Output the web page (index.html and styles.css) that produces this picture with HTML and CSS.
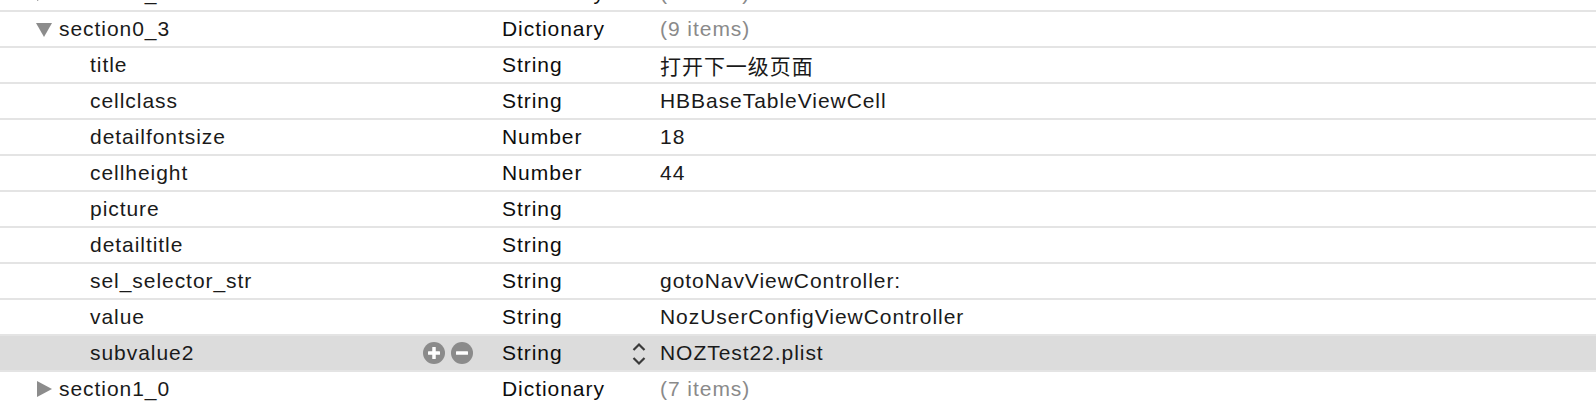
FILE: index.html
```html
<!DOCTYPE html>
<html>
<head>
<meta charset="utf-8">
<link rel="stylesheet" href="styles.css">
</head>
<body>
<div class="table">
  <div class="row partial">
    <div class="key lvl0"><span class="tri right"></span><span class="k">section0_2</span></div>
    <div class="type">Dictionary</div>
    <div class="val muted">(9 items)</div>
  </div>
  <div class="row">
    <div class="key lvl0"><span class="tri down"></span><span class="k">section0_3</span></div>
    <div class="type">Dictionary</div>
    <div class="val muted">(9 items)</div>
  </div>
  <div class="row">
    <div class="key lvl1"><span class="k">title</span></div>
    <div class="type">String</div>
    <div class="val">打开下一级页面</div>
  </div>
  <div class="row">
    <div class="key lvl1"><span class="k">cellclass</span></div>
    <div class="type">String</div>
    <div class="val">HBBaseTableViewCell</div>
  </div>
  <div class="row">
    <div class="key lvl1"><span class="k">detailfontsize</span></div>
    <div class="type">Number</div>
    <div class="val">18</div>
  </div>
  <div class="row">
    <div class="key lvl1"><span class="k">cellheight</span></div>
    <div class="type">Number</div>
    <div class="val">44</div>
  </div>
  <div class="row">
    <div class="key lvl1"><span class="k">picture</span></div>
    <div class="type">String</div>
    <div class="val"></div>
  </div>
  <div class="row">
    <div class="key lvl1"><span class="k">detailtitle</span></div>
    <div class="type">String</div>
    <div class="val"></div>
  </div>
  <div class="row">
    <div class="key lvl1"><span class="k">sel_selector_str</span></div>
    <div class="type">String</div>
    <div class="val">gotoNavViewController:</div>
  </div>
  <div class="row">
    <div class="key lvl1"><span class="k">value</span></div>
    <div class="type">String</div>
    <div class="val">NozUserConfigViewController</div>
  </div>
  <div class="row selected">
    <div class="key lvl1"><span class="k">subvalue2</span>
      <span class="btns">
        <svg class="cbtn" width="22" height="22" viewBox="0 0 22 22"><circle cx="11" cy="11" r="11" fill="#8b8b8b"/><rect x="5" y="9.25" width="12" height="3.5" rx="0.5" fill="#fff"/><rect x="9.25" y="5" width="3.5" height="12" rx="0.5" fill="#fff"/></svg>
        <svg class="cbtn" width="22" height="22" viewBox="0 0 22 22"><circle cx="11" cy="11" r="11" fill="#8b8b8b"/><rect x="5" y="9.25" width="12" height="3.5" rx="0.5" fill="#fff"/></svg>
      </span>
    </div>
    <div class="type">String
      <svg class="stepper" width="16" height="26" viewBox="0 0 16 26"><polyline points="2.5,9 8,3.5 13.5,9" fill="none" stroke="#3a3a3a" stroke-width="2.2"/><polyline points="2.5,17 8,22.5 13.5,17" fill="none" stroke="#3a3a3a" stroke-width="2.2"/></svg>
    </div>
    <div class="val">NOZTest22.plist</div>
  </div>
  <div class="row">
    <div class="key lvl0"><span class="tri right"></span><span class="k">section1_0</span></div>
    <div class="type">Dictionary</div>
    <div class="val muted">(7 items)</div>
  </div>
</div>
</body>
</html>
```

FILE: styles.css
```css
html, body {
  margin: 0;
  padding: 0;
  background: #ffffff;
}
body {
  width: 1596px;
  height: 402px;
  overflow: hidden;
  font-family: "Liberation Sans", "Noto Sans CJK SC", sans-serif;
  font-size: 21px;
  letter-spacing: 0.95px;
  color: #1a1a1a;
}
.table {
  display: flex;
  flex-direction: column;
}
.row {
  display: grid;
  grid-template-columns: 502px 158px 1fr;
  height: 34px;
  border-bottom: 2px solid #e4e4e4;
  align-items: center;
  flex-shrink: 0;
}
.row.partial {
  margin-top: -24px;
}
.row.selected {
  background: #dcdcdc;
}
.key {
  display: flex;
  align-items: center;
  height: 100%;
  padding-right: 29px;
}
.key.lvl0 {
  padding-left: 36px;
}
.key.lvl1 {
  padding-left: 90px;
}
.tri {
  display: inline-block;
  flex-shrink: 0;
}
.tri.down {
  width: 0;
  height: 0;
  border-left: 8px solid transparent;
  border-right: 8px solid transparent;
  border-top: 14px solid #8c8c8c;
  margin-top: 2px;
  margin-right: 7px;
}
.tri.right {
  width: 0;
  height: 0;
  border-top: 8px solid transparent;
  border-bottom: 8px solid transparent;
  border-left: 15px solid #8c8c8c;
  margin-right: 7px;
  margin-left: 1px;
}
.btns {
  margin-left: auto;
  display: flex;
  gap: 6px;
  align-items: center;
}
.cbtn {
  display: block;
}
.type {
  display: flex;
  align-items: center;
  height: 100%;
  color: #0d0d0d;
  padding-right: 13px;
}
.stepper {
  margin-left: auto;
  display: block;
  margin-top: 2px;
}
.val {
  color: #1a1a1a;
  white-space: nowrap;
}
.val.muted {
  color: #8a8a8a;
}
```
